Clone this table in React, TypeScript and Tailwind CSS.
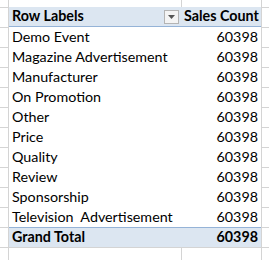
import React from "react";

const rows: [string, string][] = [
  ["Demo Event", "60398"],
  ["Magazine Advertisement", "60398"],
  ["Manufacturer", "60398"],
  ["On Promotion", "60398"],
  ["Other", "60398"],
  ["Price", "60398"],
  ["Quality", "60398"],
  ["Review", "60398"],
  ["Sponsorship", "60398"],
  ["Television\u00a0 Advertisement", "60398"],
];

const font = { fontFamily: "Lato, 'Liberation Sans', sans-serif" };

function Margin({ left }: { left?: boolean }) {
  return (
    <div
      className={`${left ? "w-[9px] border-r" : "w-[8px] border-l"} border-t border-[#d4d4d4] h-full`}
    />
  );
}

export default function App() {
  return (
    <div
      className="w-[269px] h-[260px] bg-white overflow-hidden flex flex-col text-[14.3px] text-black"
      style={font}
    >
      {/* top partial row */}
      <div className="flex h-[7px]">
        <div className="w-[9px] border-r border-[#d4d4d4]" />
        <div className="w-[173px] border-r border-[#d4d4d4]" />
        <div className="w-[79px]" />
        <div className="w-[8px] border-l border-[#d4d4d4]" />
      </div>
      {/* header */}
      <div className="flex h-[20px]">
        <Margin left />
        <div className="w-[173px] bg-[#dce6f1] border-b border-[#95b3d7] flex items-center pl-[3px] pr-[3px] font-bold leading-none">
          <span className="flex-1">Row Labels</span>
          <span className="w-[15px] h-[14px] border border-[#b4b4b4] bg-[#f4f4f4] flex items-center justify-center">
            <svg width="7" height="4" viewBox="0 0 7 4">
              <path d="M0 0 H7 L3.5 4 Z" fill="#555" />
            </svg>
          </span>
        </div>
        <div className="w-[79px] bg-[#dce6f1] border-b border-[#95b3d7] flex items-center pl-[2px] font-bold leading-none whitespace-nowrap overflow-hidden">
          Sales Count
        </div>
        <Margin />
      </div>
      {rows.map(([label, val]) => (
        <div key={label} className="flex h-[20px]">
          <Margin left />
          <div className="w-[173px] flex items-center pl-[3px] pt-[1px] leading-none whitespace-nowrap">
            {label}
          </div>
          <div className="w-[79px] flex items-center justify-end pr-[3px] pt-[1px] leading-none">
            {val}
          </div>
          <Margin />
        </div>
      ))}
      {/* grand total */}
      <div className="flex h-[20px]">
        <Margin left />
        <div className="w-[173px] bg-[#dce6f1] border-t border-[#95b3d7] flex items-center pl-[3px] font-bold leading-none">
          Grand Total
        </div>
        <div className="w-[79px] bg-[#dce6f1] border-t border-[#95b3d7] flex items-center justify-end pr-[3px] font-bold leading-none">
          60398
        </div>
        <Margin />
      </div>
      {/* bottom partial row */}
      <div className="flex flex-1">
        <div className="w-[9px] border-r border-t border-[#d4d4d4]" />
        <div className="w-[173px] border-r border-t border-[#d4d4d4]" />
        <div className="w-[79px] border-t border-[#d4d4d4]" />
        <div className="w-[8px] border-l border-t border-[#d4d4d4]" />
      </div>
    </div>
  );
}
